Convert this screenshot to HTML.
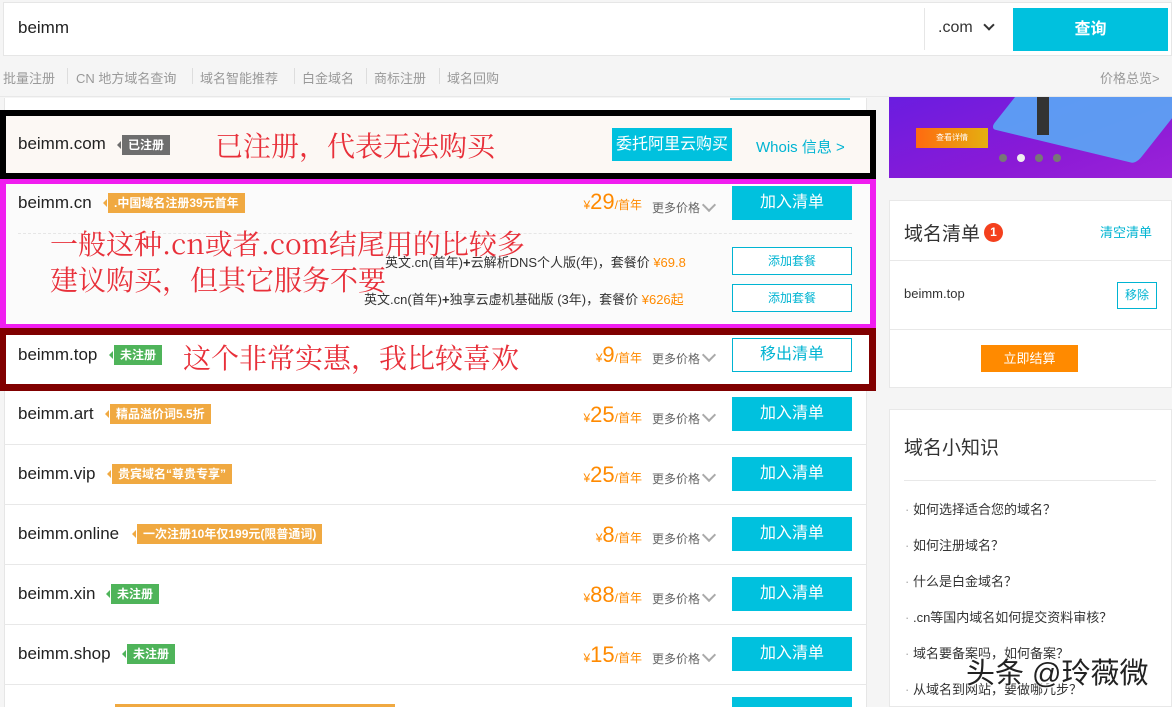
<!DOCTYPE html>
<html style="width:1172px;height:707px;overflow:hidden"><head><meta charset="utf-8"><style>
*{margin:0;padding:0;box-sizing:border-box}
body{width:1172px;height:707px;overflow:hidden;background:#f5f5f5;font-family:"Liberation Sans","Noto Sans CJK SC",sans-serif;position:relative;color:#333}
.a{position:absolute}
.btn{position:absolute;left:732px;width:120px;height:34px;background:#00c1de;color:#fff;font-size:16px;text-align:center;line-height:34px}
.obtn{position:absolute;left:732px;width:120px;background:#fff;border:1px solid #00b4d2;color:#00b4d2;text-align:center}
.dn{position:absolute;left:18px;font-size:17px;color:#222}
.tag{position:absolute;height:20px;line-height:20px;font-size:12px;color:#fff;font-weight:bold;padding:0 6px}
.tag:before{content:"";position:absolute;left:-5px;top:6px;border:4px solid transparent;border-right:4px solid;border-right-color:inherit;border-left:0;}
.or{background:#f0a941;border-color:#f0a941}
.gr{background:#4fb45a;border-color:#4fb45a}
.price{position:absolute;color:#ff8a00;font-size:12px;text-align:right;width:62px;left:580px}
.price b{font-weight:normal;font-size:22px}
.more{position:absolute;left:652px;font-size:12px;color:#666}
.chev{position:absolute;left:704px;width:10px;height:10px;border-right:2px solid #aaa;border-bottom:2px solid #aaa;transform:rotate(45deg)}
.line{position:absolute;left:4px;width:863px;height:1px;background:#e8e8e8}
.ann{position:absolute;color:#e8303a;font-family:"Noto Serif CJK SC","Liberation Serif",serif;font-size:28px;line-height:1}
.k{position:absolute;left:905px;font-size:13px;color:#333}
.nv{position:absolute;top:68px;font-size:13px;color:#999;white-space:nowrap}
.sp{position:absolute;top:68px;width:1px;height:16px;background:#ddd}
</style></head><body>
<div class="a" style="left:3px;top:2px;width:1169px;height:54px;background:#fff;border:1px solid #e6e6e6"></div>
<div class="a" style="left:18px;top:18px;font-size:17px;color:#222">beimm</div>
<div class="a" style="left:924px;top:8px;width:1px;height:42px;background:#e6e6e6"></div>
<div class="a" style="left:938px;top:19px;font-size:16px;color:#333">.com</div>
<div class="a" style="left:985px;top:21px;width:8px;height:8px;border-right:2px solid #333;border-bottom:2px solid #333;transform:rotate(45deg)"></div>
<div class="a" style="left:1013px;top:8px;width:155px;height:43px;background:#00c1de;color:#fff;font-size:16px;font-weight:bold;text-align:center;line-height:43px">查询</div>
<div class="a" style="left:0;top:57px;width:1172px;height:40px;background:#f5f5f5;border-bottom:1px solid #e8e8e8"></div>
<div class="nv" style="left:3px">批量注册</div><div class="sp" style="left:67px"></div>
<div class="nv" style="left:76px">CN 地方域名查询</div><div class="sp" style="left:192px"></div>
<div class="nv" style="left:200px">域名智能推荐</div><div class="sp" style="left:294px"></div>
<div class="nv" style="left:302px">白金域名</div><div class="sp" style="left:366px"></div>
<div class="nv" style="left:374px">商标注册</div><div class="sp" style="left:439px"></div>
<div class="nv" style="left:447px">域名回购</div>
<div class="a" style="left:1100px;top:68px;font-size:13px;color:#999">价格总览&gt;</div>
<div class="a" style="left:4px;top:98px;width:863px;height:609px;background:#fff;border-left:1px solid #e6e6e6;border-right:1px solid #e6e6e6"></div>
<div class="a" style="left:730px;top:98px;width:120px;height:2px;background:#6dd3e6"></div>
<div class="a" style="left:0;top:110px;width:876px;height:69px;border:6px solid #000;background:#fcf8f4"></div>
<div class="dn" style="top:134px">beimm.com</div>
<div class="tag" style="left:122px;top:135px;background:#6e6e6e;border-color:#6e6e6e">已注册</div>
<div class="ann" style="left:215px;top:131px">已注册，代表无法购买</div>
<div class="a" style="left:612px;top:128px;width:120px;height:33px;background:#00c1de;color:#fff;font-size:16px;text-align:center;line-height:33px">委托阿里云购买</div>
<div class="a" style="left:756px;top:136px;font-size:15px;color:#00b4d2">Whois 信息 &gt;</div>
<div class="a" style="left:0;top:179px;width:876px;height:151px;border:6px solid #f01ef0;border-top-width:5px;background:#fbfbfb"></div>
<div class="dn" style="top:193px">beimm.cn</div>
<div class="tag or" style="left:108px;top:193px">.中国域名注册39元首年</div>
<div class="price" style="top:189px">¥<b>29</b>/首年</div>
<div class="more" style="top:199px">更多价格</div><div class="chev" style="top:200px"></div>
<div class="btn" style="top:186px">加入清单</div>
<div class="a" style="left:18px;top:233px;width:834px;border-top:1px dashed #e6e6e6"></div>
<div class="a" style="left:385px;top:252px;font-size:13px;color:#333;white-space:nowrap">英文.cn(首年)<b>+</b>云解析DNS个人版(年)，套餐价 <span style="color:#ff8a00">¥69.8</span></div>
<div class="a" style="left:364px;top:289px;font-size:13px;color:#333;white-space:nowrap">英文.cn(首年)<b>+</b>独享云虚机基础版 (3年)，套餐价 <span style="color:#ff8a00">¥626起</span></div>
<div class="obtn" style="top:247px;height:28px;line-height:26px;font-size:12px">添加套餐</div>
<div class="obtn" style="top:284px;height:28px;line-height:26px;font-size:12px">添加套餐</div>
<div class="ann" style="left:50px;top:225px;line-height:36px">一般这种.cn或者.com结尾用的比较多<br>建议购买，但其它服务不要</div>
<div class="a" style="left:0;top:328px;width:876px;height:63px;border:7px solid #800000;border-left-width:6px;background:#fff"></div>
<div class="dn" style="top:345px">beimm.top</div>
<div class="tag gr" style="left:114px;top:345px">未注册</div>
<div class="ann" style="left:183px;top:343px">这个非常实惠，我比较喜欢</div>
<div class="price" style="top:342px">¥<b>9</b>/首年</div>
<div class="more" style="top:350px">更多价格</div><div class="chev" style="top:350px"></div>
<div class="obtn" style="top:338px;height:34px;line-height:32px;font-size:16px">移出清单</div>
<div class="dn" style="top:404px">beimm.art</div><div class="tag or" style="left:110px;top:404px">精品溢价词5.5折</div>
<div class="price" style="top:402px">¥<b>25</b>/首年</div><div class="more" style="top:410px">更多价格</div><div class="chev" style="top:410px"></div><div class="btn" style="top:397px">加入清单</div>
<div class="line" style="top:444px"></div>
<div class="dn" style="top:464px">beimm.vip</div><div class="tag or" style="left:112px;top:464px">贵宾域名“尊贵专享”</div>
<div class="price" style="top:462px">¥<b>25</b>/首年</div><div class="more" style="top:470px">更多价格</div><div class="chev" style="top:470px"></div><div class="btn" style="top:457px">加入清单</div>
<div class="line" style="top:504px"></div>
<div class="dn" style="top:524px">beimm.online</div><div class="tag or" style="left:137px;top:524px">一次注册10年仅199元(限普通词)</div>
<div class="price" style="top:522px">¥<b>8</b>/首年</div><div class="more" style="top:530px">更多价格</div><div class="chev" style="top:530px"></div><div class="btn" style="top:517px">加入清单</div>
<div class="line" style="top:564px"></div>
<div class="dn" style="top:584px">beimm.xin</div><div class="tag gr" style="left:111px;top:584px">未注册</div>
<div class="price" style="top:582px">¥<b>88</b>/首年</div><div class="more" style="top:590px">更多价格</div><div class="chev" style="top:590px"></div><div class="btn" style="top:577px">加入清单</div>
<div class="line" style="top:624px"></div>
<div class="dn" style="top:644px">beimm.shop</div><div class="tag gr" style="left:127px;top:644px">未注册</div>
<div class="price" style="top:642px">¥<b>15</b>/首年</div><div class="more" style="top:650px">更多价格</div><div class="chev" style="top:650px"></div><div class="btn" style="top:637px">加入清单</div>
<div class="line" style="top:684px"></div>
<div class="a" style="left:115px;top:704px;width:280px;height:3px;background:#f0a941"></div>
<div class="btn" style="top:697px;height:10px"></div>
<div class="a" style="left:889px;top:97px;width:283px;height:81px;background:linear-gradient(160deg,#6a1de0,#8a1ad6 60%,#9b22d8);overflow:hidden">
 <div class="a" style="left:120px;top:-30px;width:170px;height:80px;background:#5aa8f5;transform:skewX(-30deg) rotate(12deg);border-radius:6px;opacity:.9"></div>
 <div class="a" style="left:148px;top:0;width:12px;height:38px;background:#333"></div>
 <div class="a" style="left:27px;top:31px;width:72px;height:20px;background:linear-gradient(90deg,#ff6a10,#e4b010);color:#fff;font-size:8px;text-align:center;line-height:20px">查看详情</div>
 <div class="a" style="left:110px;top:57px;width:8px;height:8px;border-radius:50%;background:#777"></div>
 <div class="a" style="left:128px;top:57px;width:8px;height:8px;border-radius:50%;background:#eee"></div>
 <div class="a" style="left:146px;top:57px;width:8px;height:8px;border-radius:50%;background:#777"></div>
 <div class="a" style="left:164px;top:57px;width:8px;height:8px;border-radius:50%;background:#777"></div>
</div>
<div class="a" style="left:889px;top:200px;width:283px;height:188px;background:#fff;border:1px solid #e8e8e8"></div>
<div class="a" style="left:904px;top:219px;font-size:19px;color:#333">域名清单</div>
<div class="a" style="left:984px;top:223px;width:19px;height:19px;border-radius:50%;background:#f4401d;color:#fff;font-size:12px;text-align:center;line-height:19px;font-weight:bold">1</div>
<div class="a" style="left:1100px;top:222px;font-size:13px;color:#00b4d2">清空清单</div>
<div class="a" style="left:890px;top:260px;width:282px;height:1px;background:#e8e8e8"></div>
<div class="a" style="left:904px;top:286px;font-size:13px;color:#333">beimm.top</div>
<div class="a" style="left:1117px;top:282px;width:40px;height:27px;border:1px solid #00b4d2;color:#00b4d2;font-size:12px;text-align:center;line-height:25px">移除</div>
<div class="a" style="left:890px;top:329px;width:282px;height:1px;background:#e8e8e8"></div>
<div class="a" style="left:981px;top:345px;width:97px;height:27px;background:#ff8a00;color:#fff;font-size:13px;text-align:center;line-height:27px">立即结算</div>
<div class="a" style="left:889px;top:409px;width:283px;height:298px;background:#fff;border:1px solid #e8e8e8"></div>
<div class="a" style="left:904px;top:433px;font-size:19px;color:#333">域名小知识</div>
<div class="a" style="left:904px;top:480px;width:252px;height:1px;background:#e8e8e8"></div>
<div class="k" style="top:499px"><span style="color:#aaa">· </span>如何选择适合您的域名？</div>
<div class="k" style="top:535px"><span style="color:#aaa">· </span>如何注册域名？</div>
<div class="k" style="top:571px"><span style="color:#aaa">· </span>什么是白金域名？</div>
<div class="k" style="top:607px"><span style="color:#aaa">· </span>.cn等国内域名如何提交资料审核？</div>
<div class="k" style="top:643px"><span style="color:#aaa">· </span>域名要备案吗，如何备案？</div>
<div class="k" style="top:679px"><span style="color:#aaa">· </span>从域名到网站，要做哪几步？</div>
<div class="a" style="left:966px;top:650px;font-size:29px;color:#222;white-space:nowrap;text-shadow:0 0 2px #fff,0 0 2px #fff,1px 1px 0 #fff,-1px -1px 0 #fff">头条 @玲薇微</div>
</body></html>
